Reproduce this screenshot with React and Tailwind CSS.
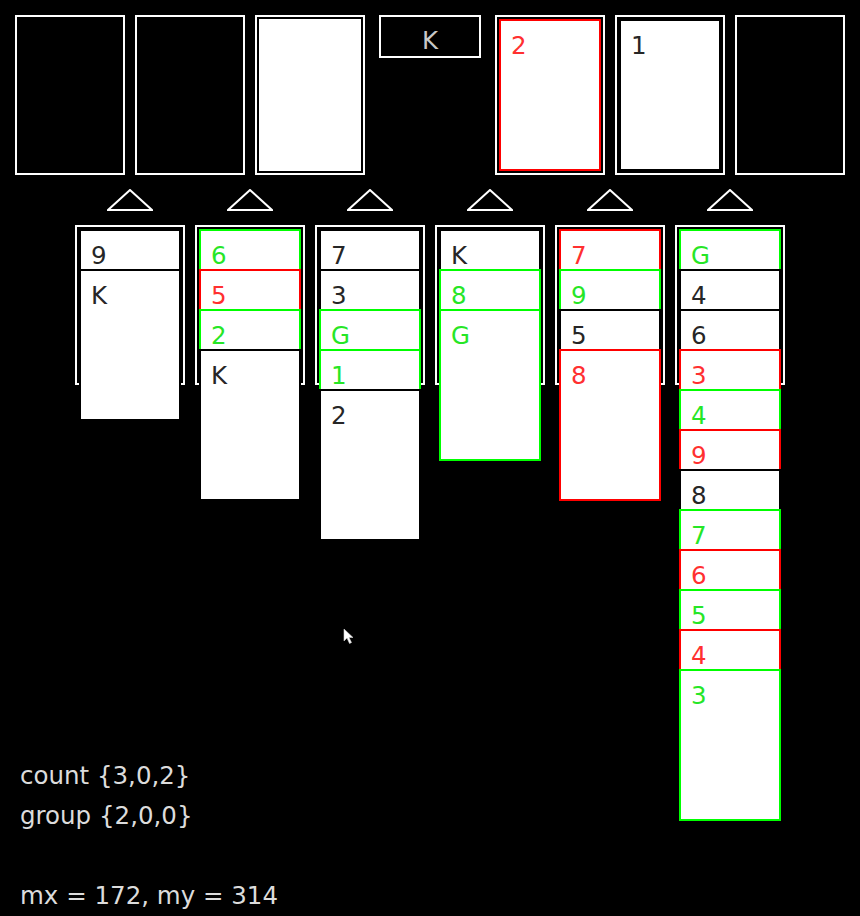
import React from 'react';

// card colour = border + label colour
const tone = {
    k: "border-black text-[#262626]",
    r: "border-[#ff0000] text-[#ff3030]",
    g: "border-[#00ff00] text-[#26e626]",
    w: "border-white text-[#262626]",
};

const topRow = [
    { type: "slot" },
    { type: "slot" },
    { type: "slot", card: { v: "", c: "w" } },
    { type: "deck", label: "K" },
    { type: "slot", card: { v: "2", c: "r" } },
    { type: "slot", card: { v: "1", c: "k" } },
    { type: "slot" },
];

const piles = [
    [["9", "k"], ["K", "k"]],
    [["6", "g"], ["5", "r"], ["2", "g"], ["K", "k"]],
    [["7", "k"], ["3", "k"], ["G", "g"], ["1", "g"], ["2", "k"]],
    [["K", "k"], ["8", "g"], ["G", "g"]],
    [["7", "r"], ["9", "g"], ["5", "k"], ["8", "r"]],
    [["G", "g"], ["4", "k"], ["6", "k"], ["3", "r"], ["4", "g"], ["9", "r"], ["8", "k"], ["7", "g"], ["6", "r"], ["5", "g"], ["4", "r"], ["3", "g"]],
];

function Card({ v, c, first }) {
    return (
        <div className={`w-[102px] h-[152px] border-2 bg-white pl-[10px] pt-[11px] text-[24.5px] leading-[28px] ${tone[c]} ${first ? "" : "-mt-[112px]"} relative`}>
            {v}
        </div>
    );
}

function Triangle() {
    return (
        <svg width="46" height="22" viewBox="0 0 46 22">
            <polygon points="23,1 1,21 45,21" fill="none" stroke="white" strokeWidth="2" />
        </svg>
    );
}

export default function App() {
    return (
        <div className="relative w-[860px] h-[916px] bg-black overflow-hidden font-['DejaVu_Sans',sans-serif]">
            {/* foundations / stock row */}
            <div className="flex gap-[10px] pl-[15px] pt-[15px]">
                {topRow.map((s, i) =>
                    s.type === "deck" ? (
                        <div key={i} className="w-[110px] h-[160px] pl-[4px]">
                            <div className="w-[102px] h-[43px] border-2 border-white flex justify-center pt-[10px] text-[24.5px] leading-[28px] text-[#c8c8c8]">
                                {s.label}
                            </div>
                        </div>
                    ) : (
                        <div key={i} className="w-[110px] h-[160px] border-2 border-white p-[2px]">
                            {s.card && <Card v={s.card.v} c={s.card.c} first />}
                        </div>
                    )
                )}
            </div>

            <div className="flex gap-[10px] pl-[75px] mt-[14px] h-[22px]">
                {piles.map((_, i) => (
                    <div key={i} className="w-[110px] flex justify-center">
                        <Triangle />
                    </div>
                ))}
            </div>

            {/* tableau */}
            <div className="flex gap-[10px] pl-[75px] mt-[14px] items-start">
                {piles.map((pile, i) => (
                    <div key={i} className="w-[110px] h-[160px] border-2 border-white p-[2px]">
                        {pile.map(([v, c], j) => (
                            <Card key={j} v={v} c={c} first={j === 0} />
                        ))}
                    </div>
                ))}
            </div>

            <div className="mt-[371px] pl-[20px] text-[24.5px] leading-[40px] text-[#dcdcdc]">
                <p>count {"{3,0,2}"}</p>
                <p>group {"{2,0,0}"}</p>
                <p className="h-[40px]"></p>
                <p>mx = 172, my = 314</p>
            </div>

            {/* mouse pointer */}
            <svg className="absolute left-[343px] top-[628px]" width="11" height="17" viewBox="0 0 11 17">
                <polygon points="1,1 1,13 4,10 6.5,15.5 8.5,14.5 6,9.5 10,9.5" fill="white" stroke="#cccccc" strokeWidth="0.6" />
            </svg>
        </div>
    );
}
